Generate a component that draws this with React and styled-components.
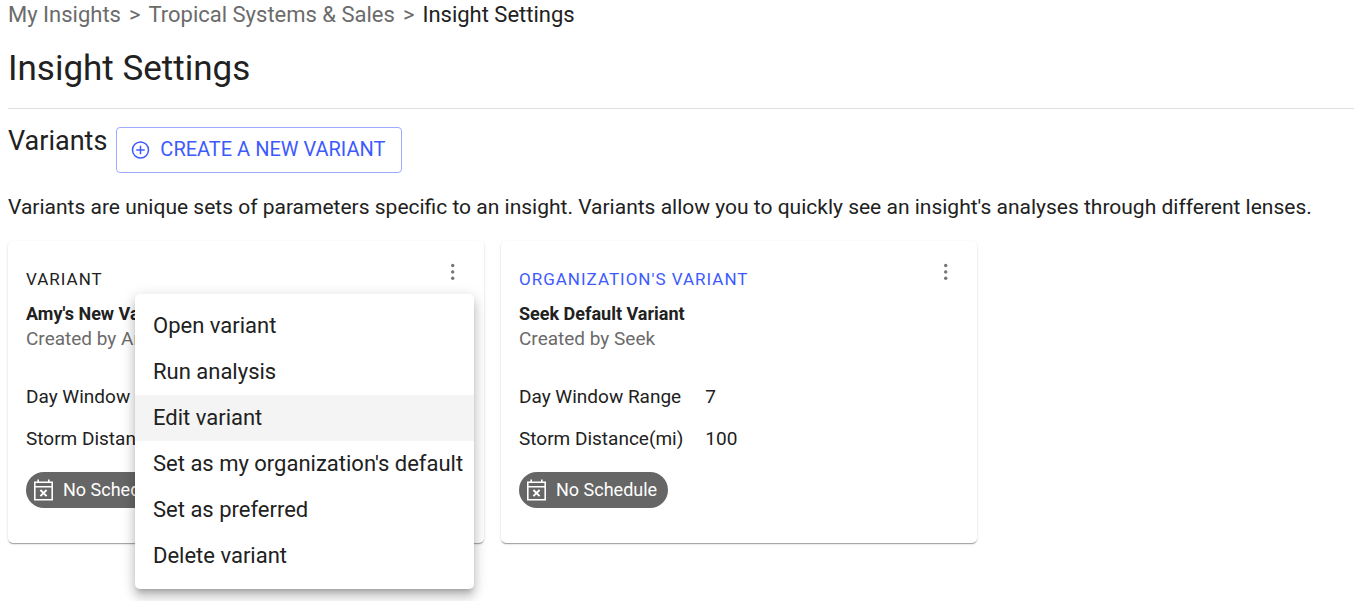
import styled, { createGlobalStyle } from "styled-components";

const GlobalStyle = createGlobalStyle`
  * {
    box-sizing: border-box;
  }

  body {
    margin: 0;
    background: #fff;
    color: #212121;
    font-family: Roboto, "Liberation Sans", sans-serif;
    font-size: 22px;
  }
`;

// Page
const Page = styled.main`
  min-height: 100vh;
  padding-left: 8px;
`;

const Breadcrumbs = styled.nav`
  display: flex;
  gap: 8px;
  line-height: 30px;
  color: #6b6b6b;
`;

const Crumb = styled.a`
  color: ${({ $current }) => ($current ? "#212121" : "#6b6b6b")};
  text-decoration: none;
`;

const PageTitle = styled.h1`
  margin: 0;
  padding: 15px 0;
  border-bottom: 1px solid #e0e0e0;
  font-size: 35px;
  font-weight: 400;
  line-height: 48px;
`;

const SectionHeader = styled.div`
  display: flex;
  gap: 9px;
  padding: 18px 0;
`;

const SectionTitle = styled.h2`
  margin: 0;
  font-size: 27px;
  font-weight: 400;
  line-height: 28px;
`;

const CreateButton = styled.button`
  display: flex;
  align-items: center;
  gap: 10px;
  height: 46px;
  padding: 0 16px 2px 14px;
  border: 1px solid #9dabff;
  border-radius: 4px;
  background: transparent;
  color: #3d5afe;
  font-family: inherit;
  font-size: 20px;
  font-weight: 400;
  cursor: pointer;
`;

const Description = styled.p`
  margin: 0;
  font-size: 21px;
  line-height: 32px;
`;

// Cards
const CardList = styled.div`
  display: flex;
  flex-wrap: wrap;
  gap: 17px;
  padding-top: 18px;
`;

const Card = styled.section`
  position: relative;
  flex: 0 1 476px;
  padding: 18px 18px 35px;
  border-radius: 5px;
  box-shadow: 0 2px 1px -1px rgba(0, 0, 0, 0.2), 0 1px 1px rgba(0, 0, 0, 0.14),
    0 1px 3px rgba(0, 0, 0, 0.12);
`;

const CardHeader = styled.header`
  display: flex;
  justify-content: space-between;
  align-items: flex-start;
`;

const CardType = styled.span`
  padding-top: 7px;
  color: ${({ $organization }) => ($organization ? "#3d5afe" : "#212121")};
  font-size: 17px;
  letter-spacing: 1px;
  line-height: 26px;
  text-transform: uppercase;
`;

const MoreButton = styled.button`
  display: flex;
  padding: 0;
  border: 0;
  background: none;
  color: #757575;
  cursor: pointer;
`;

const CardTitle = styled.h3`
  margin: 9px 0 0;
  font-size: 18px;
  font-weight: 700;
  line-height: 26px;
`;

const CardAuthor = styled.p`
  margin: 0;
  color: #6b6b6b;
  font-size: 19px;
  line-height: 24px;
`;

const Params = styled.table`
  margin-top: 25px;
  border-collapse: collapse;
  font-size: 19px;
  line-height: 42px;

  th,
  td {
    padding: 0 22px 0 0;
    font-weight: 400;
    text-align: left;
  }
`;

const ScheduleChip = styled.span`
  display: inline-flex;
  align-items: center;
  gap: 8px;
  height: 36px;
  margin-top: 12px;
  padding: 0 11px 1px 6px;
  border-radius: 18px;
  background: #666;
  color: #fff;
  font-size: 18px;
  vertical-align: top;
`;

// Menu
const Menu = styled.div`
  position: absolute;
  top: 53px;
  right: 10px;
  z-index: 1;
  display: flex;
  flex-direction: column;
  width: 339px;
  padding: 9px 0 10px;
  border-radius: 5px;
  background: #fff;
  box-shadow: 0 5px 5px -3px rgba(0, 0, 0, 0.2),
    0 8px 10px 1px rgba(0, 0, 0, 0.14), 0 3px 14px 2px rgba(0, 0, 0, 0.12);
`;

const MenuItem = styled.button`
  padding: 0 18px;
  border: 0;
  background: ${({ $active }) => ($active ? "#f4f4f4" : "transparent")};
  color: inherit;
  font: inherit;
  line-height: 46px;
  text-align: left;
  white-space: nowrap;
  cursor: pointer;
`;

// Icons
const PlusCircleIcon = () => (
  <svg width="19" height="20" viewBox="0 0 19 20" fill="none" stroke="currentColor" strokeWidth="1.5" aria-hidden="true">
    <circle cx="9.5" cy="11" r="8" />
    <path d="M9.5 6.8v8.4M5.3 11h8.4" />
  </svg>
);

const MoreIcon = () => (
  <svg width="28" height="26" viewBox="0 0 28 26" fill="currentColor" aria-hidden="true">
    <circle cx="14.7" cy="6.5" r="1.7" />
    <circle cx="14.7" cy="12.9" r="1.7" />
    <circle cx="14.7" cy="19.3" r="1.7" />
  </svg>
);

const CalendarIcon = () => (
  <svg width="23" height="24" viewBox="0 0 23 24" fill="none" stroke="currentColor" strokeWidth="1.6" aria-hidden="true">
    <path d="M2.8 4.3h17.4v17.4H2.8zM2.8 8.7h17.4M6.2 4.3V1.5M16.8 4.3V1.5" />
    <path d="M8.4 12l6.2 6.2M14.6 12l-6.2 6.2" strokeWidth="1.9" />
  </svg>
);

const variants = [
  {
    type: "Variant",
    title: "Amy's New Variant",
    author: "Created by Amy",
    menuOpen: true,
  },
  {
    type: "Organization's Variant",
    title: "Seek Default Variant",
    author: "Created by Seek",
    organization: true,
  },
];

const menuItems = [
  "Open variant",
  "Run analysis",
  "Edit variant",
  "Set as my organization's default",
  "Set as preferred",
  "Delete variant",
];

function VariantMenu() {
  return (
    <Menu role="menu">
      {menuItems.map((item) => (
        <MenuItem key={item} role="menuitem" $active={item === "Edit variant"}>
          {item}
        </MenuItem>
      ))}
    </Menu>
  );
}

function VariantCard({ type, title, author, organization, menuOpen }) {
  return (
    <Card>
      <CardHeader>
        <CardType $organization={organization}>{type}</CardType>
        <MoreButton aria-label="Variant options">
          <MoreIcon />
        </MoreButton>
      </CardHeader>
      <CardTitle>{title}</CardTitle>
      <CardAuthor>{author}</CardAuthor>
      <Params>
        <tbody>
          <tr>
            <th scope="row">Day Window Range</th>
            <td>7</td>
          </tr>
          <tr>
            <th scope="row">Storm Distance(mi)</th>
            <td>100</td>
          </tr>
        </tbody>
      </Params>
      <ScheduleChip>
        <CalendarIcon />
        No Schedule
      </ScheduleChip>
      {menuOpen && <VariantMenu />}
    </Card>
  );
}

export default function App() {
  return (
    <>
      <GlobalStyle />
      <Page>
        <Breadcrumbs aria-label="Breadcrumb">
          <Crumb href="#insights">My Insights</Crumb>
          <span>&gt;</span>
          <Crumb href="#tropical">Tropical Systems &amp; Sales</Crumb>
          <span>&gt;</span>
          <Crumb href="#settings" $current aria-current="page">
            Insight Settings
          </Crumb>
        </Breadcrumbs>
        <PageTitle>Insight Settings</PageTitle>
        <SectionHeader>
          <SectionTitle>Variants</SectionTitle>
          <CreateButton>
            <PlusCircleIcon />
            CREATE A NEW VARIANT
          </CreateButton>
        </SectionHeader>
        <Description>
          Variants are unique sets of parameters specific to an insight. Variants allow you to
          quickly see an insight's analyses through different lenses.
        </Description>
        <CardList>
          {variants.map((variant) => (
            <VariantCard key={variant.title} {...variant} />
          ))}
        </CardList>
      </Page>
    </>
  );
}
